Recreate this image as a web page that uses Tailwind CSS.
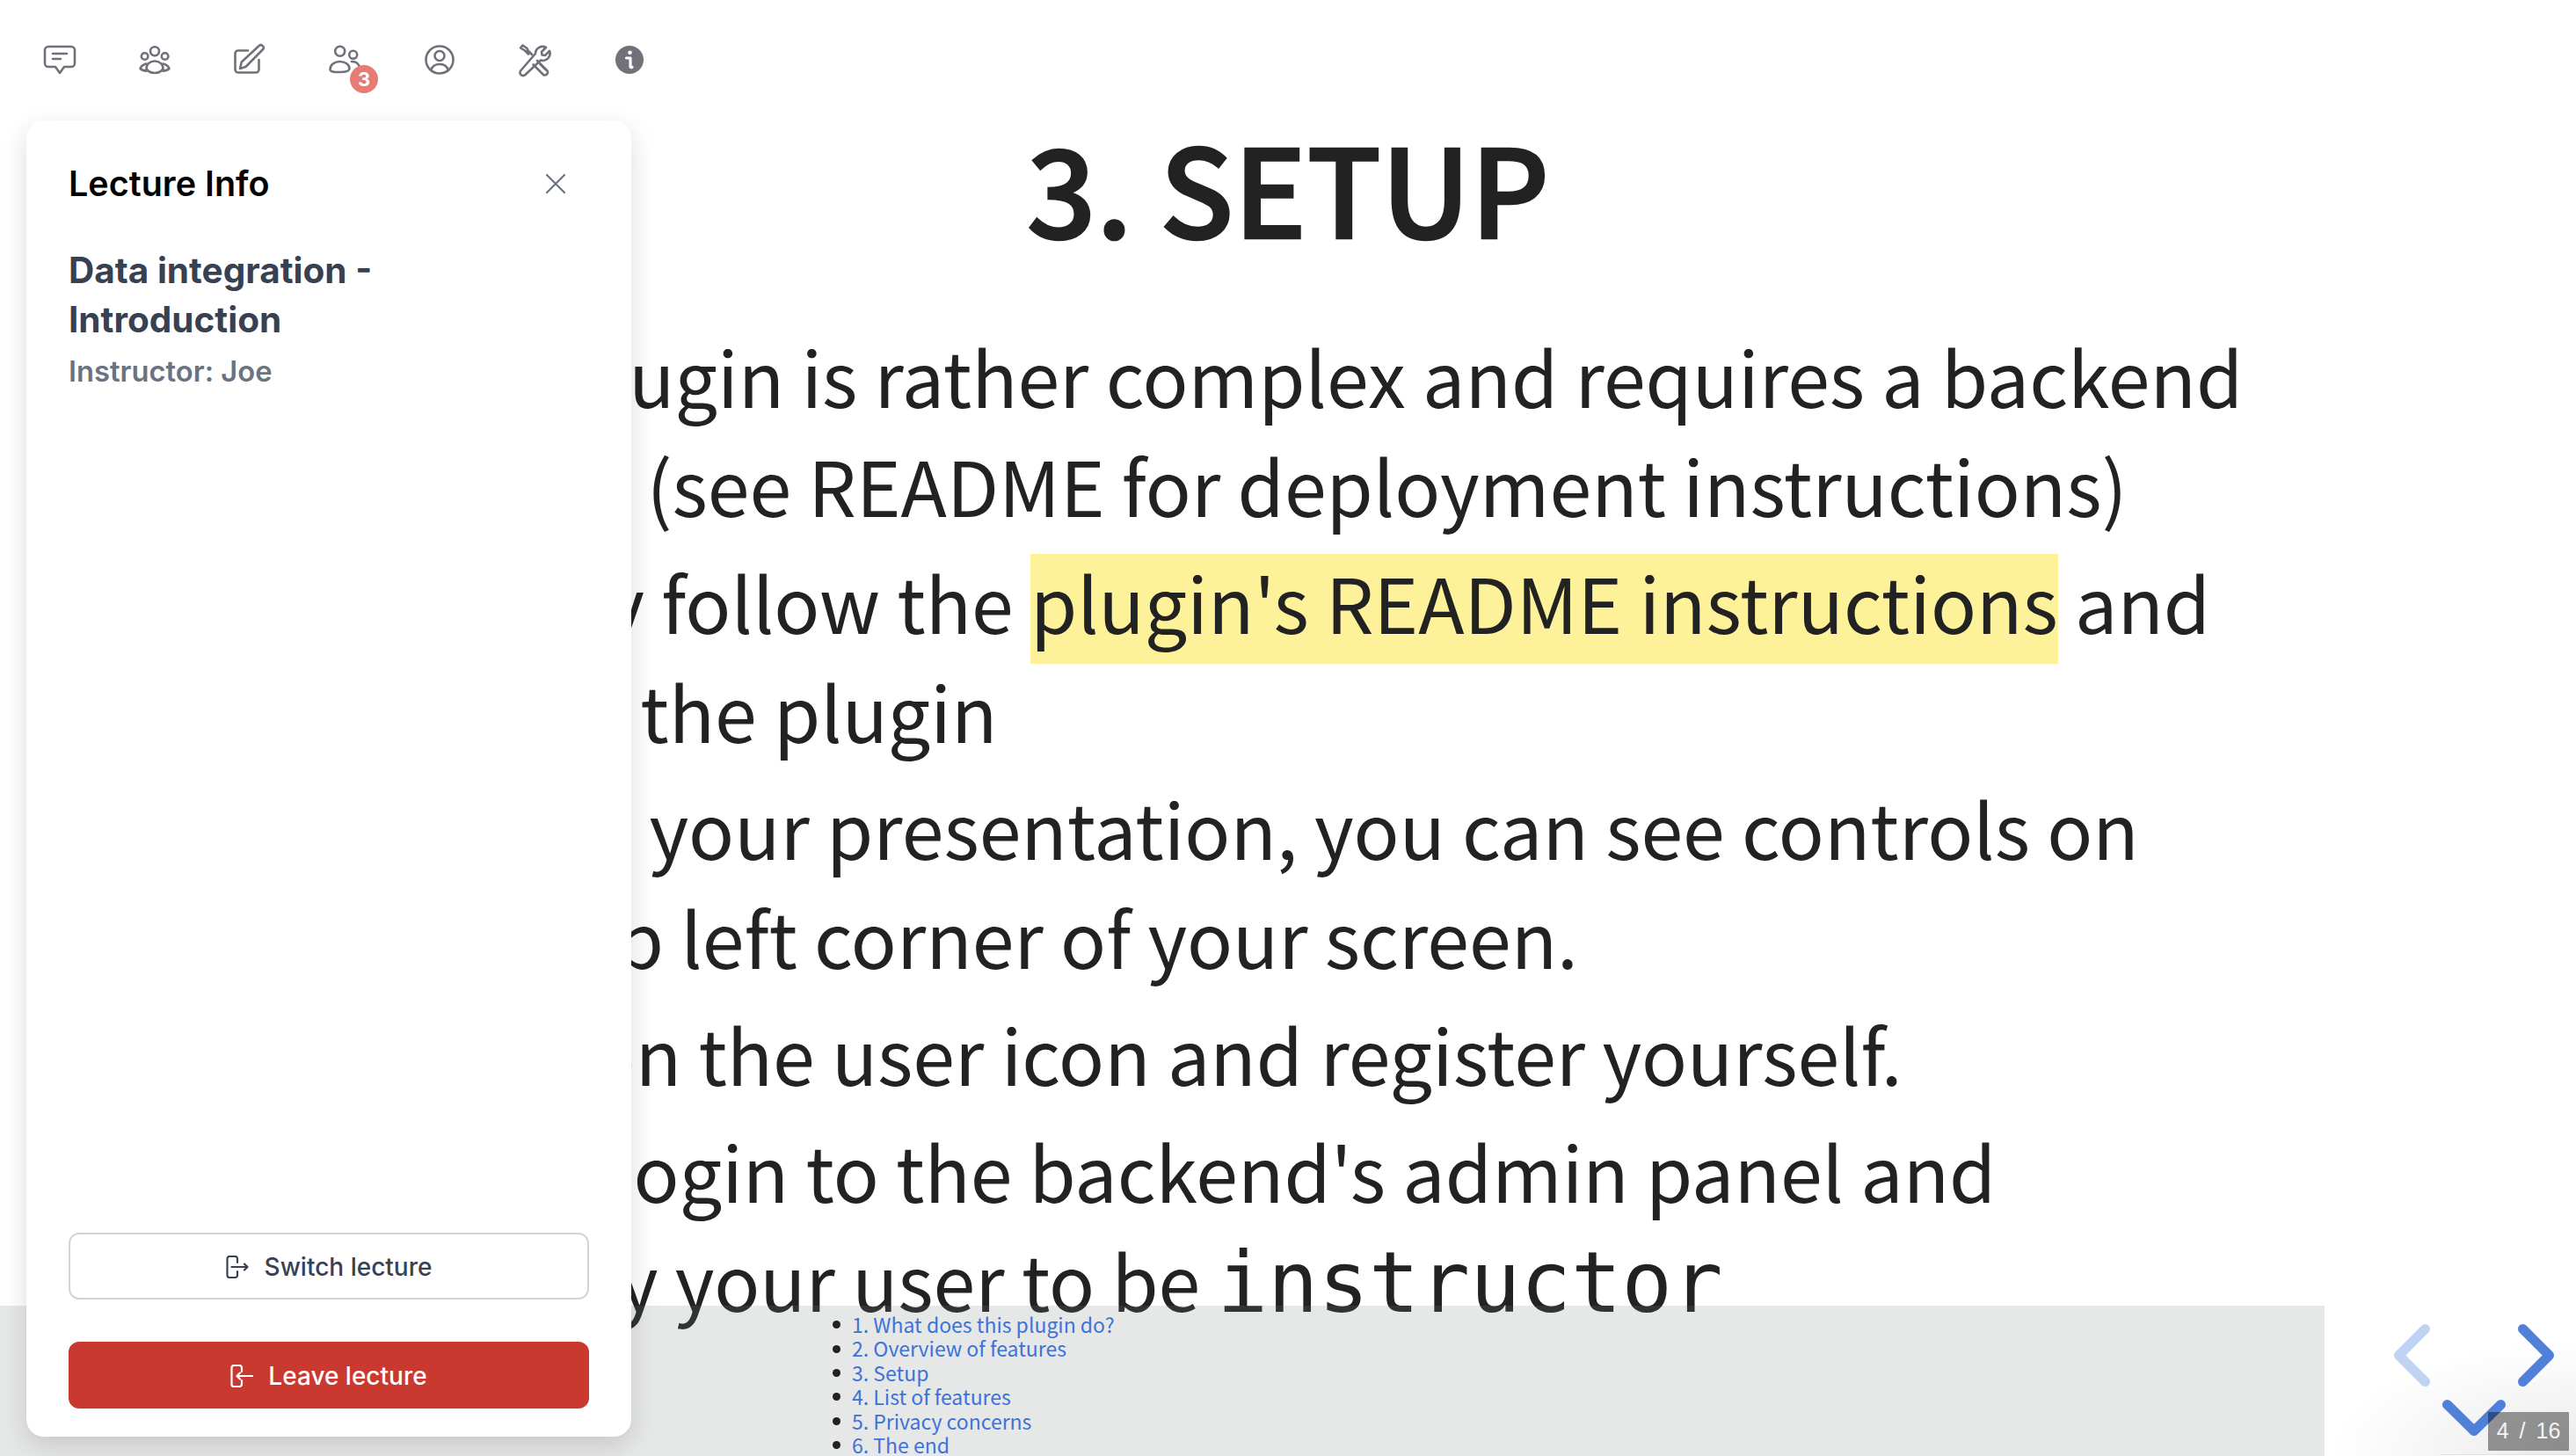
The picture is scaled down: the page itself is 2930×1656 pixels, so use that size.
<!DOCTYPE html>
<html lang="en">
<head>
  <meta charset="UTF-8" />
  <title>Lecture slide</title>
  <script src="https://cdn.jsdelivr.net/npm/@tailwindcss/browser@4"></script>
</head>
<body class="relative w-[2930px] h-[1656px] overflow-hidden bg-white">

  <!-- slide -->
  <main class="h-full pt-[131px] font-['Noto_Sans_CJK_SC',sans-serif] text-[#222222]">
    <h1 class="text-center text-[138.500px] leading-[160px] font-medium [-webkit-text-stroke:2.5px_#222222]">3. SETUP</h1>
    <ul class="mt-[74px] ml-[467px] w-[2200px] text-[86px] leading-[124px] space-y-[9px] whitespace-nowrap">
      <li>The plugin is rather complex and requires a backend<br />server (see README for deployment instructions)</li>
      <li><span class="-ml-[11px]">Simply</span> follow the <span class="bg-[linear-gradient(transparent_9px,#fdf199_9px)] pb-[9px]">plugin's README instructions</span> and<br />install the plugin</li>
      <li><span class="-ml-[17px]">During</span> your presentation, you can see controls on<br />the top left corner of your screen.</li>
      <li class="-ml-[10px]">Click on the user icon and register yourself.</li>
      <li><span class="ml-[6px]">Then</span> login to the backend's admin panel and<br />modify your user to be <code class="font-['DejaVu_Sans_Mono',monospace] text-[95.500px] leading-[130px]">instructor</code></li>
    </ul>
  </main>

  <!-- bottom bar with table of contents -->
  <div class="absolute left-0 bottom-0 w-[2644px] h-[171px] bg-[rgba(123,125,125,0.19)] pt-[8px] pl-[969px] font-['Noto_Sans_CJK_SC',sans-serif] text-[23px] leading-[27.4px] text-[#3f72d9]">
    <ul>
      <li class="flex items-center"><span class="w-[9px] h-[9px] rounded-full bg-[#222222] -ml-[22px] mr-[13px]"></span>1. What does this plugin do?</li>
      <li class="flex items-center"><span class="w-[9px] h-[9px] rounded-full bg-[#222222] -ml-[22px] mr-[13px]"></span>2. Overview of features</li>
      <li class="flex items-center"><span class="w-[9px] h-[9px] rounded-full bg-[#222222] -ml-[22px] mr-[13px]"></span>3. Setup</li>
      <li class="flex items-center"><span class="w-[9px] h-[9px] rounded-full bg-[#222222] -ml-[22px] mr-[13px]"></span>4. List of features</li>
      <li class="flex items-center"><span class="w-[9px] h-[9px] rounded-full bg-[#222222] -ml-[22px] mr-[13px]"></span>5. Privacy concerns</li>
      <li class="flex items-center"><span class="w-[9px] h-[9px] rounded-full bg-[#222222] -ml-[22px] mr-[13px]"></span>6. The end</li>
    </ul>
  </div>

  <!-- toolbar -->
  <nav class="absolute left-[48px] top-[48px] flex gap-[68px] text-[#71717a]">
    <svg class="w-10 h-10" viewBox="0 0 40 40" fill="none" stroke="currentColor" stroke-width="2.6" stroke-linecap="round" stroke-linejoin="round">
      <path d="M7 5h26a4 4 0 0 1 4 4v15a4 4 0 0 1-4 4h-8l-5 7-5-7H7a4 4 0 0 1-4-4V9a4 4 0 0 1 4-4z"/>
      <path d="M12 13h16M12 19h9"/>
    </svg>
    <svg class="w-10 h-10" viewBox="0 0 40 40" fill="none" stroke="currentColor" stroke-width="2.6" stroke-linecap="round" stroke-linejoin="round">
      <circle cx="20" cy="10.3" r="5"/><circle cx="8.6" cy="16" r="3.8"/><circle cx="31.6" cy="16" r="3.8"/>
      <path d="M10.5 30c0-5 4-8.5 9.5-8.5s9.5 3.5 9.5 8.5c-2 3.5-5.5 5-9.5 5s-7.5-1.5-9.5-5z"/>
      <path d="M10.5 24.5c-3.5.8-6 2.8-7 5.5 1.5 1.6 4 2.4 7 2.6M29.5 24.5c3.5.8 6 2.8 7 5.5-1.500 1.600-4 2.400-7 2.600"/>
    </svg>
    <svg class="w-10 h-10" viewBox="0 0 40 40" fill="none" stroke="currentColor" stroke-width="2.6" stroke-linecap="round" stroke-linejoin="round">
      <path d="M18 9.500H7A3.500 3.500 0 0 0 3.500 13v18A3.500 3.500 0 0 0 7 34.500h20a3.500 3.500 0 0 0 3.500-3.500V20"/>
      <path d="M9 30l1.800-7.500L31 3.800c1-.9 2.400-.9 3.300 0l.9.900c.9.900.9 2.400 0 3.300L15.500 28z"/>
    </svg>
    <div class="relative w-10 h-10">
      <svg class="w-10 h-10" viewBox="0 0 40 40" fill="none" stroke="currentColor" stroke-width="2.6" stroke-linecap="round" stroke-linejoin="round">
        <circle cx="14.700" cy="10.300" r="5.500"/><circle cx="29.700" cy="14.300" r="4.500"/>
        <path d="M3.500 31c0-5.500 5-9 11-9s11 3.500 11 8c0 3-4 4-11 4s-11-.5-11-3z"/>
        <path d="M28 22c3.500 0 7 1.500 8.500 5"/>
      </svg>
      <span class="absolute left-[26px] top-[26px] w-8 h-8 rounded-full bg-[#e67c73] text-white text-[22px] font-bold font-['Inter',sans-serif] flex items-center justify-center">3</span>
    </div>
    <svg class="w-10 h-10" viewBox="0 0 40 40" fill="none" stroke="currentColor" stroke-width="2.6" stroke-linecap="round" stroke-linejoin="round">
      <circle cx="20" cy="20" r="15.500"/><circle cx="20" cy="15.500" r="5.500"/>
      <path d="M10.500 31c1.500-4 5-6 9.500-6s8 2 9.500 6"/>
    </svg>
    <svg class="w-10 h-10" viewBox="0 0 40 40" fill="none" stroke="currentColor" stroke-width="2.6" stroke-linecap="round" stroke-linejoin="round">
      <path d="M13 13.500L9 9.500 4 6.500l2.500-3 5 3.500 1 2.500 4.500 4.500"/>
      <path d="M23 21l11.500 11.500a3.300 3.300 0 0 1-4.500 4.500L18.500 25.500"/>
      <path d="M26.500 25l6 6"/>
      <path d="M33 6l-5 5 .5 3.500 3.500 .5 5-5a8 8 0 0 1-10 10.500L9.500 37c-1.500 1.300-3.500 1.300-5 0s-1.300-3.500 0-5L21 13A8 8 0 0 1 33 6z"/>
    </svg>
    <svg class="w-10 h-10" viewBox="0 0 40 40">
      <circle cx="20" cy="20" r="16" fill="currentColor"/>
      <circle cx="20.500" cy="11.800" r="2.300" fill="#fff"/>
      <path d="M16.500 18h4.500v9.500c0 1 .8 1.300 2 1" fill="none" stroke="#fff" stroke-width="3.200" stroke-linecap="round" stroke-linejoin="round"/>
    </svg>
  </nav>

  <!-- lecture info panel -->
  <aside class="absolute left-[30px] top-[137px] w-[688px] h-[1497px] rounded-[20px] bg-white shadow-[0_10px_30px_rgba(0,0,0,0.14)] px-[48px] pb-[32px] flex flex-col font-['Inter',sans-serif]">
    <div class="flex items-center justify-between pt-[50px] pr-[26px]">
      <h2 class="text-[39.500px] leading-[44px] font-semibold text-black">Lecture Info</h2>
      <svg class="w-[24px] h-[24px] text-[#6b7280]" viewBox="0 0 24 24" fill="none" stroke="currentColor" stroke-width="2.200" stroke-linecap="round"><path d="M2 2l20 20M22 2L2 22"/></svg>
    </div>
    <h3 class="mt-[49px] w-[420px] text-[40.500px] leading-[56px] font-bold text-[#374151]">Data integration - Introduction</h3>
    <p class="mt-[10px] text-[32.700px] leading-[40px] font-semibold text-[#6b7280]">Instructor: Joe</p>
    <div class="mt-auto flex flex-col gap-[48px]">
      <button class="h-[76px] pt-[2px] rounded-[12px] border-2 border-[#d1d5db] bg-white flex items-center justify-center gap-[18px] text-[28px] font-medium text-[#374151]">
        <svg class="w-[26px] h-[26px]" viewBox="0 0 26 26" fill="none" stroke="currentColor" stroke-width="2.200" stroke-linecap="round" stroke-linejoin="round"><path d="M13 8V3.500A2.500 2.500 0 0 0 10.500 1H4a2.500 2.500 0 0 0-2.500 2.500v19A2.500 2.500 0 0 0 4 25h6.500a2.500 2.500 0 0 0 2.500-2.500V18"/><path d="M6.500 13H24.500M21 9.500l3.500 3.500-3.500 3.500"/></svg>
        Switch lecture
      </button>
      <button class="h-[76px] pt-[2px] rounded-[12px] bg-[#c9392f] flex items-center justify-center gap-[17px] text-[28px] font-medium text-white">
        <svg class="w-[26px] h-[26px]" viewBox="0 0 26 26" fill="none" stroke="currentColor" stroke-width="2.200" stroke-linecap="round" stroke-linejoin="round"><path d="M13 8V3.500A2.500 2.500 0 0 0 10.500 1H4a2.500 2.500 0 0 0-2.500 2.500v19A2.500 2.500 0 0 0 4 25h6.500a2.500 2.500 0 0 0 2.500-2.500V18"/><path d="M25 13H7.500M11 9.500L7.500 13l3.500 3.500"/></svg>
        Leave lecture
      </button>
    </div>
  </aside>

  <!-- soft shade in the bottom right corner -->
  <div class="absolute right-0 bottom-0 w-[286px] h-[140px] bg-[radial-gradient(ellipse_280px_130px_at_100%_100%,#e9e9e9,#ffffff)]"></div>
  <div class="absolute left-[2775px] top-[1654px] w-[155px] h-[2px] bg-white rounded-tl-[4px] border-t border-[#e2e2e2]"></div>

  <!-- navigation arrows -->
  <svg class="absolute left-[2723px] top-[1506px] w-[41px] h-[71px]" viewBox="0 0 41 71" fill="none" stroke="#c1d3f2" stroke-width="11" stroke-linecap="round" stroke-linejoin="round"><path d="M35.500 5.500L5.500 35.500l30 30"/></svg>
  <svg class="absolute left-[2864px] top-[1506px] w-[41px] h-[71px]" viewBox="0 0 41 71" fill="none" stroke="#4f81db" stroke-width="11" stroke-linecap="round" stroke-linejoin="round"><path d="M5.500 5.500l30 30-30 30"/></svg>
  <svg class="absolute left-[2778px] top-[1592px] w-[72px] h-[41px]" viewBox="0 0 72 41" fill="none" stroke="#4f81db" stroke-width="11" stroke-linecap="round" stroke-linejoin="round"><path d="M5.500 5.500l30.500 30 30.500-30"/></svg>

  <!-- slide number -->
  <div class="absolute left-[2830px] top-[1606px] w-[92px] h-[44px] bg-black/40 flex items-center justify-center gap-[12px] text-[25px] text-white/90 font-['Liberation_Sans',sans-serif]">
    <span>4</span><span>/</span><span>16</span>
  </div>
</body>
</html>
